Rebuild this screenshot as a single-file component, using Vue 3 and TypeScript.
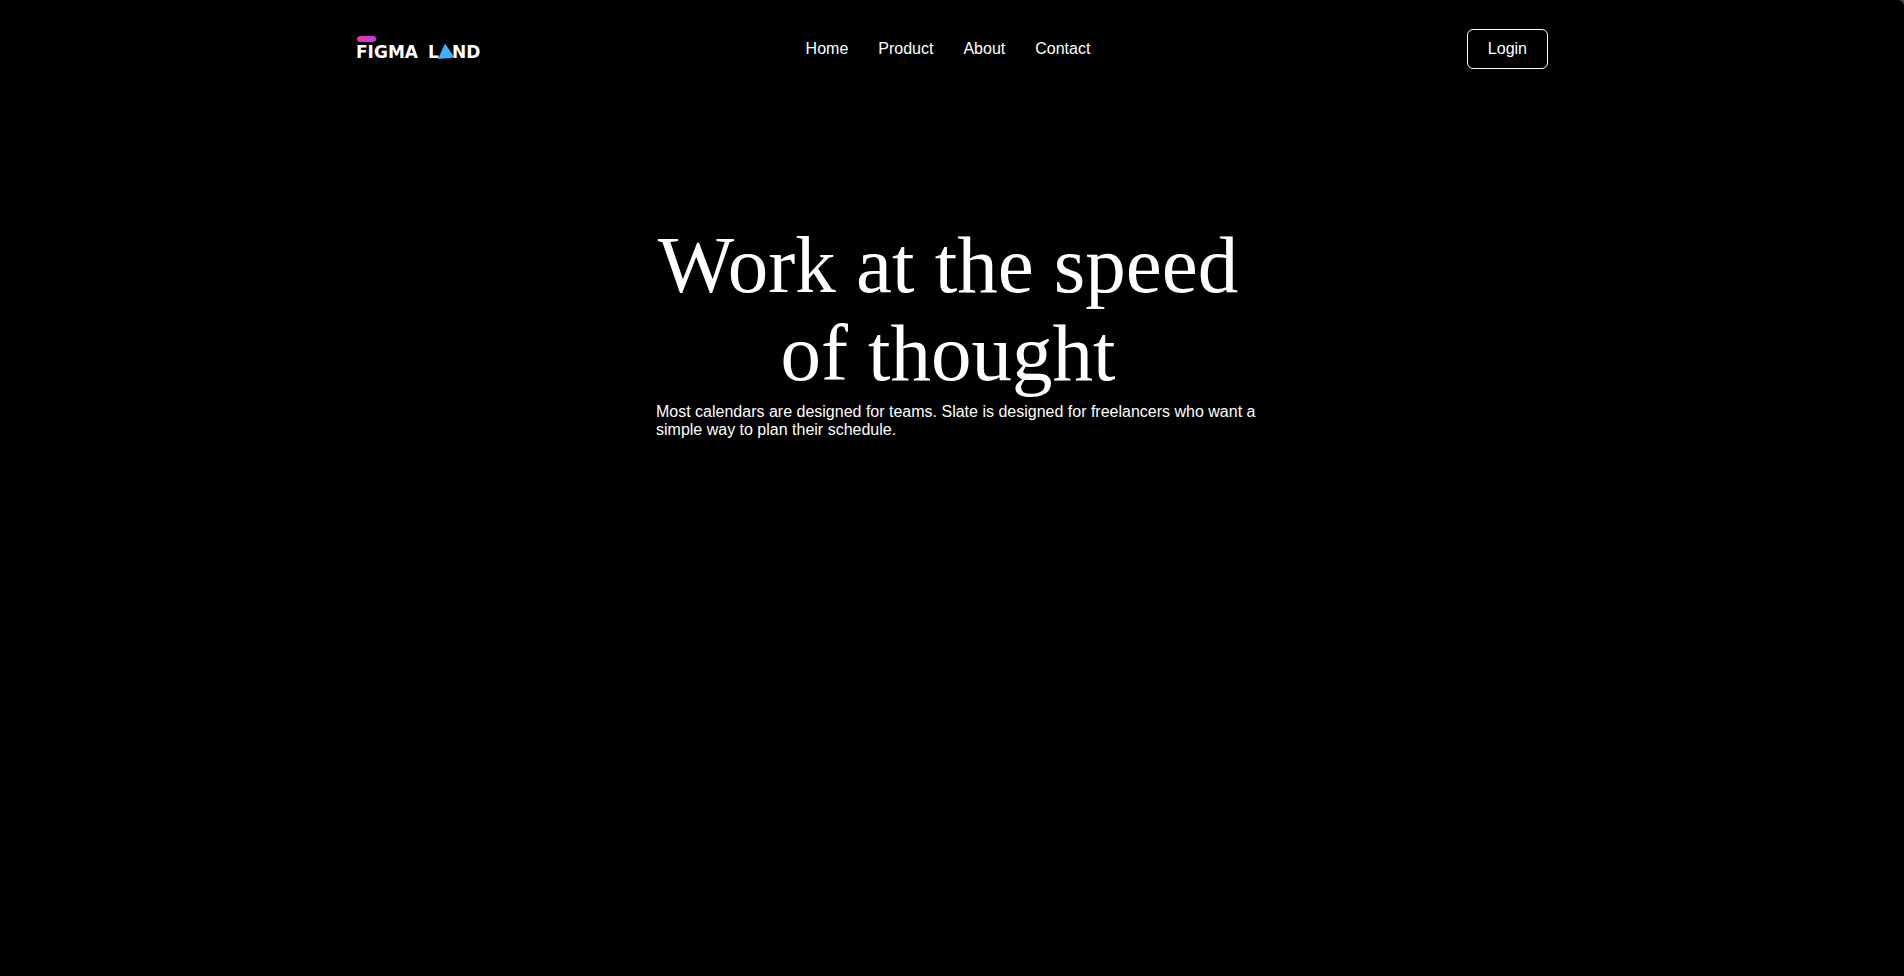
<script setup lang="ts">
interface NavLink {
  label: string
  href: string
}

const links: NavLink[] = [
  { label: 'Home', href: '#home' },
  { label: 'Product', href: '#product' },
  { label: 'About', href: '#about' },
  { label: 'Contact', href: '#contact' },
]
</script>

<template>
  <div class="page">
    <header class="header">
      <a class="logo" href="#home" aria-label="Figma Land">
        <svg width="126" height="28" viewBox="0 0 126 28" aria-hidden="true">
          <defs>
            <linearGradient id="pill" x1="0" y1="0" x2="1" y2="0">
              <stop offset="0.45" stop-color="#e535ad" />
              <stop offset="0.6" stop-color="#c63ddc" />
            </linearGradient>
          </defs>
          <rect x="1" y="1" width="19" height="6" rx="3" fill="url(#pill)" />
          <text class="wordmark" x="0" y="23">FIGMA</text>
          <text class="wordmark" x="72" y="23">L</text>
          <text class="wordmark" x="96" y="23">ND</text>
          <path d="M89 8.5 L98.5 22.5 L82 24 Z" fill="#3fb1ff" />
        </svg>
      </a>
      <nav class="nav" aria-label="Main">
        <a v-for="link in links" :key="link.label" :href="link.href">{{ link.label }}</a>
      </nav>
      <button class="login" type="button">Login</button>
    </header>
    <main class="hero">
      <h1>Work at the speed of thought</h1>
      <p>
        Most calendars are designed for teams. Slate is designed for freelancers who want a simple
        way to plan their schedule.
      </p>
    </main>
  </div>
</template>

<style>
body {
  margin: 0;
  background: #484848;
}
</style>

<style scoped>
.page {
  box-sizing: border-box;
  min-height: 100vh;
  padding: 29px 24px;
  border-top-right-radius: 6px;
  background: #000;
  color: #fff;
  font: 16px/18px 'Liberation Sans', Arial, sans-serif;
}

.header {
  display: grid;
  grid-template-columns: 1fr auto 1fr;
  align-items: center;
  max-width: 1192px;
  margin: 0 auto;
}

.logo {
  display: flex;
}

.wordmark {
  fill: #fff;
  font: 700 17px 'DejaVu Sans', sans-serif;
}

.nav {
  display: flex;
  gap: 30px;
  padding-right: 8px;
}

.nav a {
  color: inherit;
  text-decoration: none;
}

.login {
  justify-self: end;
  height: 40px;
  padding: 0 20px;
  border: 1px solid #fff;
  border-radius: 6px;
  background: transparent;
  color: inherit;
  font: inherit;
  cursor: pointer;
}

.hero {
  max-width: 600px;
  margin: 152px auto 0;
  padding-left: 8px;
}

h1 {
  margin: 0;
  padding-right: 16px;
  font: 400 81px/88px 'Liberation Serif', 'Times New Roman', serif;
  text-align: center;
}

p {
  margin: 6px 0 0;
}
</style>
